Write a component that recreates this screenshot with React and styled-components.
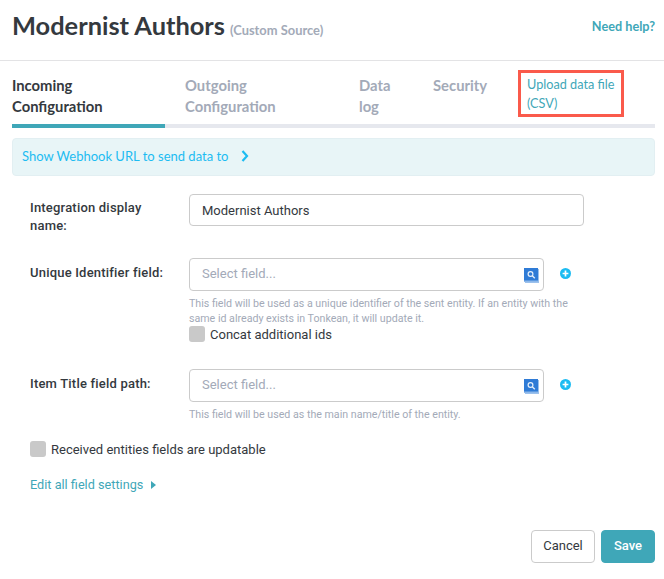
import React from "react";
import styled, { createGlobalStyle } from "styled-components";

const GlobalStyle = createGlobalStyle`
  html, body {
    margin: 0;
    padding: 0;
    background: #fff;
  }
  * {
    box-sizing: border-box;
  }
`;

const Page = styled.div`
  width: 664px;
  height: 579px;
  overflow: hidden;
  font-family: Roboto, "Liberation Sans", sans-serif;
  color: #34393e;
`;

const Header = styled.header`
  height: 61px;
  padding: 0 9px 0 12px;
  border-bottom: 1px solid #e3e3e5;
  display: flex;
  align-items: center;
  justify-content: space-between;
  font-family: Lato, "Liberation Sans", sans-serif;
`;

const Title = styled.h1`
  margin: 0 0 6px;
  font-size: 25.4px;
  line-height: 32px;
  font-weight: 700;
  color: #34393e;
`;

const Subtitle = styled.small`
  margin-left: 5px;
  font-size: 12.9px;
  font-weight: 700;
  color: #a3aab8;
`;

const Help = styled.a`
  margin-bottom: 8px;
  font-size: 12.7px;
  font-weight: 700;
  color: #3fa7b8;
`;

const Tabs = styled.nav`
  margin: 9px 9px 0 12px;
  height: 58px;
  display: flex;
  border-bottom: 4px solid #e6e8ee;
  font-family: Lato, "Liberation Sans", sans-serif;
`;

const Tab = styled.div`
  width: ${({ $width }) => $width}px;
  margin-right: ${({ $gap }) => $gap}px;
  height: 58px;
  padding-top: 5px;
  font-size: 14.8px;
  line-height: 21px;
  font-weight: 700;
  color: ${({ $active }) => ($active ? "#34393e" : "#a3aab8")};
  border-bottom: 4px solid ${({ $active }) => ($active ? "#3fa7b8" : "transparent")};
`;

const UploadTab = styled.a`
  margin: 0 0 0 -1px;
  width: 106px;
  height: 47px;
  padding: 2px 0 0 6px;
  border: 3px solid #fa5a4b;
  font-family: Lato, "Liberation Sans", sans-serif;
  font-size: 12.7px;
  line-height: 18.5px;
  color: #3fa7b8;
`;

const Banner = styled.div`
  margin: 10px 9px 0 12px;
  height: 38px;
  padding: 0 9px 2px;
  display: flex;
  align-items: center;
  gap: 13px;
  background: #e8f5f7;
  border: 1px solid #e2eff2;
  border-radius: 4px;
  font-family: Lato, "Liberation Sans", sans-serif;
  font-size: 13px;
  color: #1cbcf2;
`;

const Form = styled.form`
  margin-top: 18px;
  padding-left: 30px;
`;

const Row = styled.div`
  display: grid;
  grid-template-columns: 159px 395px;
  margin-bottom: ${({ $after }) => $after}px;
`;

const Label = styled.label`
  padding-top: ${({ $top }) => $top || 5}px;
  padding-right: 20px;
  font-size: 13px;
  line-height: 18px;
  font-weight: 500;
  letter-spacing: 0.2px;
  color: #34393e;
`;

const FieldRow = styled.div`
  display: flex;
  align-items: center;
`;

const TextInput = styled.div`
  position: relative;
  flex: 0 0 ${({ $width }) => $width}px;
  height: ${({ $height }) => $height}px;
  padding: 0 12px ${({ $placeholder }) => ($placeholder ? 2 : 0)}px;
  display: flex;
  align-items: center;
  border: 1px solid #cbcbcb;
  border-radius: 4px;
  font-size: 13px;
  color: ${({ $placeholder }) => ($placeholder ? "#a3aab8" : "#34393e")};
`;

const BookIcon = styled.svg`
  position: absolute;
  right: 4px;
  top: 9px;
`;

const AddIcon = styled.svg`
  margin: 0 0 2px 16px;
`;

const HelpText = styled.p`
  margin: 5px 0 0;
  width: 395px;
  font-size: 10.65px;
  line-height: 15px;
  color: #a3aab8;
`;

const CheckRow = styled.div`
  display: flex;
  align-items: center;
  gap: 5px;
  height: 16px;
  font-size: 13px;
  color: #34393e;
  margin-bottom: ${({ $after }) => $after || 0}px;
`;

const CheckBox = styled.span`
  width: 16px;
  height: 16px;
  background: #c9c9c9;
  border-radius: 3px;
  flex: none;
`;

const EditLink = styled.a`
  display: flex;
  align-items: center;
  gap: 8px;
  font-size: 12.7px;
  line-height: 18px;
  color: #3fa7b8;
`;

const Footer = styled.div`
  margin: 36px 9px 0 0;
  display: flex;
  justify-content: flex-end;
  gap: 6px;
`;

const Button = styled.button`
  height: 33px;
  width: ${({ $width }) => $width}px;
  padding: 0 0 2px;
  font-family: Roboto, "Liberation Sans", sans-serif;
  font-size: 13px;
  font-weight: ${({ $primary }) => ($primary ? 500 : 400)};
  color: ${({ $primary }) => ($primary ? "#fff" : "#34393e")};
  background: ${({ $primary }) => ($primary ? "#3fa7b8" : "#fff")};
  border: 1px solid ${({ $primary }) => ($primary ? "#3fa7b8" : "#cbcbcb")};
  border-radius: 4px;
`;

const Book = () => (
  <BookIcon width="15" height="15" viewBox="0 0 15 15">
    <rect x="0" y="0" width="14" height="14" fill="#2f7bd6" />
    <path d="M0 12.5H14V14H0Z" fill="#8db8ea" />
    <path d="M14 1H15V15H1V14H14Z" fill="#9cc1ec" />
    <circle cx="6.5" cy="6" r="2.4" fill="none" stroke="#e6f0fb" strokeWidth="1.2" />
    <path d="M8.3 7.8L10.8 10.2" stroke="#e6f0fb" strokeWidth="1.4" />
  </BookIcon>
);

const Add = () => (
  <AddIcon width="11" height="11" viewBox="0 0 11 11">
    <circle cx="5.5" cy="5.5" r="5.5" fill="#1cbcf2" />
    <path d="M5.5 2.6V8.4M2.6 5.5H8.4" stroke="#fff" strokeWidth="1.7" />
  </AddIcon>
);

const App = () => (
  <Page>
    <GlobalStyle />
    <Header>
      <Title>
        Modernist Authors<Subtitle>(Custom Source)</Subtitle>
      </Title>
      <Help>Need help?</Help>
    </Header>

    <Tabs>
      <Tab $active $width={153} $gap={20}>
        Incoming Configuration
      </Tab>
      <Tab $width={110} $gap={64}>
        Outgoing Configuration
      </Tab>
      <Tab $width={40} $gap={34}>
        Data log
      </Tab>
      <Tab $width={86} $gap={0}>
        Security
      </Tab>
      <UploadTab>Upload data file (CSV)</UploadTab>
    </Tabs>

    <Banner>
      Show Webhook URL to send data to
      <svg width="8" height="12" viewBox="0 0 8 12">
        <path d="M1.5 1L6 6L1.5 11" fill="none" stroke="#1cbcf2" strokeWidth="2.2" />
      </svg>
    </Banner>

    <Form>
      <Row $after={23}>
        <Label>Integration display name:</Label>
        <TextInput $width={395} $height={32}>
          Modernist Authors
        </TextInput>
      </Row>

      <Row $after={27}>
        <Label $top={6}>Unique Identifier field:</Label>
        <div>
          <FieldRow>
            <TextInput $placeholder $width={355} $height={33}>
              Select field...
              <Book />
            </TextInput>
            <Add />
          </FieldRow>
          <HelpText>
            This field will be used as a unique identifier of the sent entity. If an entity with the
            same id already exists in Tonkean, it will update it.
          </HelpText>
          <CheckRow>
            <CheckBox />
            Concat additional ids
          </CheckRow>
        </div>
      </Row>

      <Row $after={19}>
        <Label $top={6}>Item Title field path:</Label>
        <div>
          <FieldRow>
            <TextInput $placeholder $width={355} $height={33}>
              Select field...
              <Book />
            </TextInput>
            <Add />
          </FieldRow>
          <HelpText>This field will be used as the main name/title of the entity.</HelpText>
        </div>
      </Row>

      <CheckRow $after={19}>
        <CheckBox />
        Received entities fields are updatable
      </CheckRow>

      <EditLink>
        Edit all field settings
        <svg width="5" height="8" viewBox="0 0 5 8">
          <path d="M0 0L5 4L0 8Z" fill="#3fa7b8" />
        </svg>
      </EditLink>

      <Footer>
        <Button $width={64}>Cancel</Button>
        <Button $primary $width={54}>
          Save
        </Button>
      </Footer>
    </Form>
  </Page>
);

export default App;
